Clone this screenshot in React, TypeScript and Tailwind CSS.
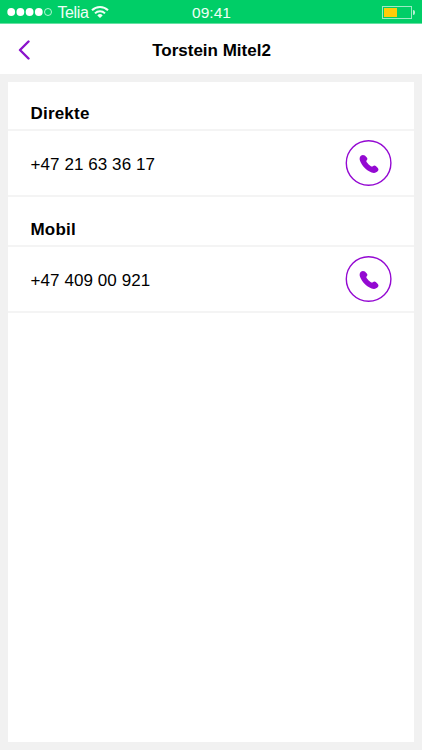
import React from "react";

function StatusBar() {
  return (
    <div className="grid h-6 grid-cols-[1fr_auto_1fr] items-center border-b border-[#66e0a3] bg-[#00ce67] text-[16px] leading-5 text-[#effff6]">
      <div className="flex h-[23px] items-center pl-[7px]">
        <svg width="46" height="10" viewBox="0 0 46 10" className="mt-px" fill="#fff">
          <circle cx="4.2" cy="5" r="3.9" />
          <circle cx="13.4" cy="5" r="3.9" />
          <circle cx="22.6" cy="5" r="3.9" />
          <circle cx="31.8" cy="5" r="3.9" />
          <circle cx="41" cy="5" r="3.5" fill="none" stroke="#e0ffee" strokeWidth=".8" />
        </svg>
        <span className="ml-[4.5px] w-[31.5px] pt-[2px] text-[16px] tracking-[-0.4px]">Telia</span>
        <svg width="18" height="14" viewBox="0 0 18 14" className="ml-[2px]" fill="none" stroke="#effff6" strokeWidth="2">
          <path d="M1 5.3a11.3 11.3 0 0 1 16 0" />
          <path d="M4 8.4a7.1 7.1 0 0 1 10 0" />
          <path d="M9 13 6.3 10.4a3.8 3.8 0 0 1 5.4 0Z" fill="#effff6" stroke="none" />
        </svg>
      </div>
      <span className="pl-px pt-[2px] text-[15.5px]">09:41</span>
      <div className="flex h-[23px] items-center justify-end pr-[7px]">
        <div className="mt-px h-[13px] w-[30px] border border-[#9debc4] p-px">
          <div className="h-full w-[13px] bg-[#ffcc08]" />
        </div>
        <div className="mt-px ml-px h-[5px] w-[2px] rounded-r-sm bg-[#b8f2d4]" />
      </div>
    </div>
  );
}

function CallButton() {
  return (
    <button aria-label="Ring" className="flex h-[46px] w-[46px] items-center justify-center">
      <svg width="46" height="46" viewBox="0.4 0 46 46" fill="none" overflow="visible">
        <circle cx="23" cy="23" r="22.3" stroke="#9409d2" strokeWidth="1.4" />
        <path
          d="M15.3 15.7C16.3 14.7 18.2 14.6 19.3 15.6L21.2 17.4C22 18.2 22 19.2 21.3 20C20.6 20.8 20.6 21.5 21.2 22.3C22.3 23.9 23.7 25.2 25.3 26.2C26.1 26.7 26.8 26.6 27.5 26C28.3 25.3 29.4 25.3 30.2 26L32.2 27.9C33 28.7 33.1 29.9 32.4 30.8C30.8 32.9 28.4 33.4 26 32.4C20.6 30.1 16.4 25.9 14.5 20.9C13.7 18.8 13.9 17 15.3 15.7Z"
          fill="#9409d2"
        />
      </svg>
    </button>
  );
}

function PhoneSection({ label, number, tall }: { label: string; number: string; tall?: boolean }) {
  return (
    <section>
      <h2
        className={`flex items-center border-b-2 border-[#f4f4f4] pl-[22.5px] text-[17px] font-bold tracking-[0.2px] ${
          tall ? "h-[50px] pt-[18px]" : "h-[49px] pt-[17px]"
        }`}
      >
        {label}
      </h2>
      <div className="flex h-[66px] items-center justify-between border-b-2 border-[#f4f4f4] pr-[22.5px] pl-[22.5px]">
        <span className="pt-[3px] text-[17px] tracking-[0.08px]">{number}</span>
        <CallButton />
      </div>
    </section>
  );
}

export default function App() {
  return (
    <div className="flex h-[750px] w-[422px] flex-col bg-[#f1f1f1] font-['Liberation_Sans',sans-serif] text-black">
      <StatusBar />
      <header className="grid h-[50px] grid-cols-[1fr_auto_1fr] items-center bg-white">
        <button aria-label="Tilbake" className="pl-[18px]">
          <svg width="13" height="20" viewBox="0 0 13 20" className="mt-px" fill="none" stroke="#8b13cb" strokeWidth="2.4" strokeLinecap="round" strokeLinejoin="round">
            <path d="M10.5 1.5 2 10l8.5 8.5" />
          </svg>
        </button>
        <h1 className="pl-px pt-[3px] text-[17px] font-bold">Torstein Mitel2</h1>
        <span />
      </header>
      <main className="mx-2 mt-2 h-[660px] bg-white">
        <PhoneSection label="Direkte" number="+47 21 63 36 17" />
        <PhoneSection label="Mobil" number="+47 409 00 921" tall />
      </main>
    </div>
  );
}
